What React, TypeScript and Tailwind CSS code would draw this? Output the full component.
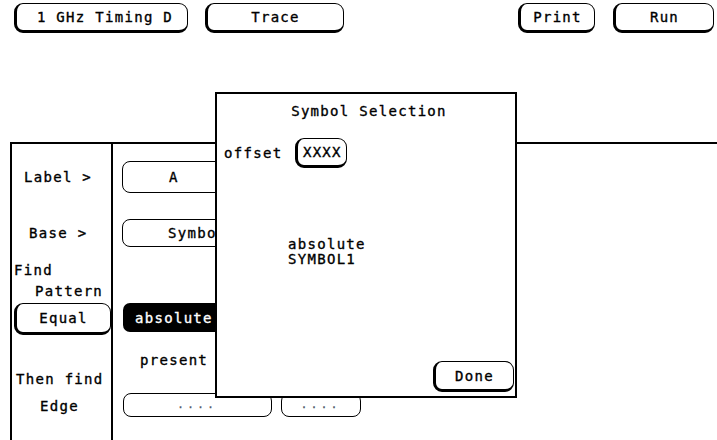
import React from "react";

const font = { fontFamily: '"DejaVu Sans Mono", "Liberation Mono", monospace' };

function Raised({ className = "", children }: { className?: string; children: React.ReactNode }) {
  return (
    <div
      className={`flex items-center justify-center rounded-[9px] border-t-[1.5px] border-r-[1.5px] border-l-[3px] border-b-[3px] border-black bg-white ${className}`}
    >
      {children}
    </div>
  );
}

function Flat({ className = "", children }: { className?: string; children: React.ReactNode }) {
  return (
    <div className={`flex items-center justify-center rounded-[8px] border-[1.5px] border-black bg-white ${className}`}>
      {children}
    </div>
  );
}

export default function App() {
  return (
    <div
      className="relative w-[717px] h-[440px] bg-white overflow-hidden text-black text-[14px] leading-[20px] tracking-[1.3px] [-webkit-text-stroke:0.35px_currentColor]"
      style={font}
    >
      {/* top bar */}
      <div className="flex items-start pt-[3px]">
        <Raised className="ml-[14px] w-[174px] h-[30px] pl-[6px]">1 GHz Timing D</Raised>
        <Raised className="ml-[17px] w-[139px] h-[30px]">Trace</Raised>
        <Raised className="ml-[174px] w-[77px] h-[30px]">Print</Raised>
        <Raised className="ml-[18px] w-[101px] h-[30px]">Run</Raised>
      </div>

      {/* main panel */}
      <div className="mt-[109px] ml-[10px] h-[298px] flex border-t-2 border-l-2 border-black">
        <div className="w-[101px] shrink-0 border-r-2 border-black flex flex-col">
          <div className="mt-[23px] pl-[12px]">Label &gt;</div>
          <div className="mt-[36px] pl-[17px]">Base &gt;</div>
          <div className="mt-[17px] pl-[2px]">Find</div>
          <div className="mt-[1px] pl-[23px]">Pattern</div>
          <Raised className="mt-[2px] ml-[2px] h-[32px] w-[97px]">Equal</Raised>
          <div className="mt-[34px] pl-[4px]">Then find</div>
          <div className="mt-[7px] pl-[28px]">Edge</div>
        </div>
        <div className="flex-1 flex flex-col">
          <Flat className="mt-[17px] ml-[9px] w-[150px] h-[32px] justify-start pl-[46px]">A</Flat>
          <Flat className="mt-[26px] ml-[9px] w-[150px] h-[28px] justify-start pl-[45px]">Symbol</Flat>
          <div className="mt-[56px] ml-[10px] w-[150px] h-[29px] rounded-[7px] bg-black text-white flex items-center pl-[12px]">
            absolute
          </div>
          <div className="mt-[18px] ml-[27px]">present</div>
          <div className="mt-[23px] ml-[10px] flex gap-[9px]">
            <Flat className="w-[149px] h-[24px] text-[10px] tracking-[4px] text-gray-600">....</Flat>
            <Flat className="w-[80px] h-[24px] text-[10px] tracking-[4px] text-gray-600">....</Flat>
          </div>
        </div>
      </div>

      {/* dialog */}
      <div className="absolute left-[215px] top-[92px] w-[302px] h-[306px] border-2 border-black bg-white flex flex-col">
        <div className="mt-[7px] text-center pl-[6px]">Symbol Selection</div>
        <div className="mt-[17px] flex items-center pl-[7px]">
          <span>offset</span>
          <Raised className="ml-[13px] w-[52px] h-[30px]">XXXX</Raised>
        </div>
        <div className="mt-[69px] pl-[71px] leading-[15px]">
          <div>absolute</div>
          <div>SYMBOL1</div>
        </div>
        <div className="mt-auto mb-[4px] mr-[1px] flex justify-end">
          <Raised className="w-[81px] h-[31px]">Done</Raised>
        </div>
      </div>
    </div>
  );
}
